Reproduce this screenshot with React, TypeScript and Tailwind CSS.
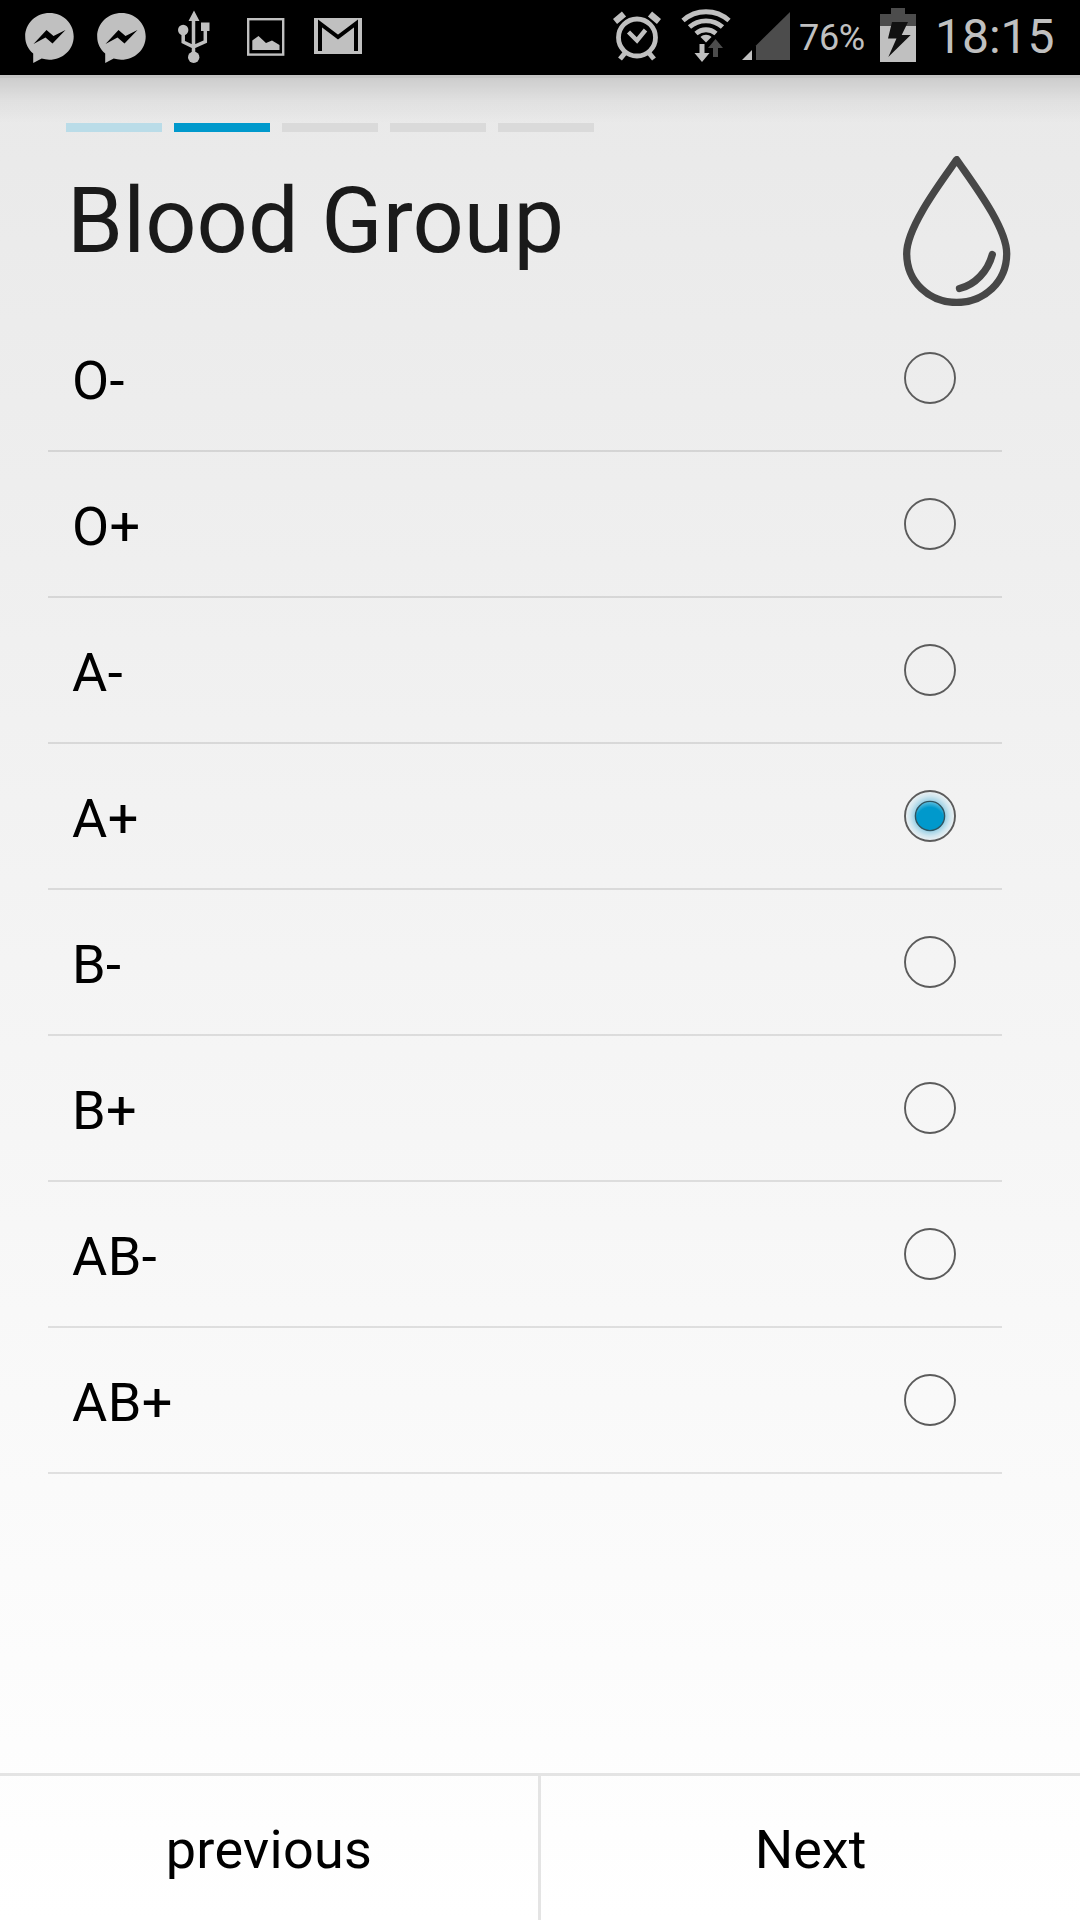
import { useState } from "react";

const groups = ["O-", "O+", "A-", "A+", "B-", "B+", "AB-", "AB+"];

const steps = ["bg-[#badce8]", "bg-[#0099cc]", "bg-[#dadada]", "bg-[#dadada]", "bg-[#dadada]"];

function MessengerIcon() {
  return (
    <svg width="50" height="52" viewBox="0 0 50 52" className="shrink-0">
      <path
        fill="#c0c0c0"
        d="M25.500 1C12 1 1.200 11.200 1.200 24.500c0 7.200 3.200 13 8 17V51l8.500-4.400c2.300.7 4.900 1.100 7.500 1.100 13.500 0 24.500-10.200 24.500-23.300S39 1 25.500 1Z"
      />
      <path fill="#000" d="M9.500 32 22.500 18l7 6 12-6L28.500 31.500 21.500 25.500Z" />
    </svg>
  );
}

function UsbIcon() {
  return (
    <svg width="34" height="54" viewBox="0 0 34 54" className="shrink-0">
      <path fill="#c0c0c0" d="M17 .5 22.500 11h-11ZM24 12.500h8.500V21H24Z" />
      <path fill="none" stroke="#c0c0c0" strokeWidth="3.500" d="M16.500 9v36M6.200 21v11L16.500 36.800M28.300 20v11.500L16.500 36.800" />
      <circle cx="6.200" cy="20" r="5.200" fill="#c0c0c0" />
      <circle cx="16.700" cy="47.300" r="5.700" fill="#c0c0c0" />
    </svg>
  );
}

function PictureIcon() {
  return (
    <svg width="38" height="38" viewBox="0 0 38 38" className="shrink-0">
      <rect x="1.200" y="1.200" width="35" height="35.400" fill="none" stroke="#c0c0c0" strokeWidth="2.400" />
      <path fill="#c0c0c0" d="M5.300 32V22.500l6.200-4.500 7.500 7 6-2.500 7.500 4.500v5Z" />
    </svg>
  );
}

function GmailIcon() {
  return (
    <svg width="48" height="36" viewBox="0 0 48 36" className="shrink-0">
      <path fill="#c0c0c0" d="M0 0h48v36H0Z" />
      <path fill="none" stroke="#000" strokeWidth="4" d="M6 33V5.500L24 19 42 5.500V33" />
    </svg>
  );
}

function AlarmIcon() {
  return (
    <svg width="48" height="50" viewBox="0 0 48 50" className="shrink-0">
      <circle cx="24" cy="26.500" r="18.500" fill="none" stroke="#c0c0c0" strokeWidth="4.800" />
      <path fill="none" stroke="#c0c0c0" strokeWidth="6.500" d="M2 10.500 11 3M46 10.500 37 3" />
      <path fill="none" stroke="#c0c0c0" strokeWidth="5" d="m12 42-5 6M36 42l5 6" />
      <path fill="none" stroke="#c0c0c0" strokeWidth="4.400" d="m15.500 21 8.500 8.500L32.500 19" />
    </svg>
  );
}

function WifiIcon() {
  return (
    <svg width="50" height="54" viewBox="0 0 50 54" className="shrink-0">
      <g fill="none" stroke="#c0c0c0" strokeWidth="4.800">
        <path d="M2 12.500C15 .800 35 .800 48 12.500" />
        <path d="M8.500 19c9-8.300 24-8.300 33 0" />
        <path d="M15 25.500c6-5 14-5 20 0" />
      </g>
      <path fill="#c0c0c0" d="M25 34.500 19.500 29c3-3 8-3 11 0Z" />
      <path fill="#4c4c4c" d="M34.500 31 42 40h-5v9h-5v-9h-5Z" />
      <path fill="#c0c0c0" d="M18.500 36h5v9h5L21 54l-7.500-9h5Z" />
    </svg>
  );
}

function SignalIcon() {
  return (
    <svg width="48" height="48" viewBox="0 0 48 48" className="shrink-0">
      <path fill="#4c4c4c" d="M48 0v48H14V33.500Z" />
      <path fill="#c0c0c0" d="M10 38v10H0Z" />
    </svg>
  );
}

function BatteryIcon() {
  return (
    <svg width="36" height="54" viewBox="0 0 36 54" className="shrink-0">
      <path fill="#4c4c4c" d="M11 0h14v6h11v12H0V6h11Z" />
      <path fill="#c0c0c0" d="M0 18h36v36H0Z" />
      <path fill="#111" d="M12 14h16l-6.300 13h9L8.300 49l8.200-18.500H8Z" />
    </svg>
  );
}

function DropIcon() {
  return (
    <svg width="108" height="150" viewBox="0 0 108 150" className="shrink-0">
      <g fill="none" stroke="#474747" strokeWidth="7.300" strokeLinecap="round" strokeLinejoin="round">
        <path d="M53.700 3.700C38 26 3.700 71 3.700 97.500c0 28.500 22.500 49 50 49s50-20.500 50-49C103.700 71 69 26 53.700 3.700Z" />
        <path d="M89.300 98.500C85 115 72 129 56.500 132.500" />
      </g>
    </svg>
  );
}

function Radio({ checked }: { checked: boolean }) {
  return (
    <svg width="52" height="52" viewBox="0 0 52 52" className="shrink-0">
      <defs>
        <radialGradient id="glow">
          <stop offset="0.550" stopColor="#8fcbe2" />
          <stop offset="0.800" stopColor="#cfe6ef" />
          <stop offset="1" stopColor="#f0f2f3" />
        </radialGradient>
        <radialGradient id="dot" cx="0.500" cy="0.680" r="0.680">
          <stop offset="0.700" stopColor="#0099cc" />
          <stop offset="1" stopColor="#63bfdf" />
        </radialGradient>
      </defs>
      <circle cx="26" cy="26" r="25" fill={checked ? "url(#glow)" : "none"} stroke="#5b5b5b" strokeWidth="1.900" />
      {checked && <circle cx="26" cy="26" r="14.600" fill="url(#dot)" stroke="#2f5460" strokeWidth="1.400" />}
    </svg>
  );
}

function StatusBar() {
  return (
    <div className="flex h-[75px] shrink-0 bg-black text-[#c0c0c0]">
      <div className="flex items-start">
        <div className="pt-3 pl-6">
          <MessengerIcon />
        </div>
        <div className="pt-3 pl-[22px]">
          <MessengerIcon />
        </div>
        <div className="pt-2.5 pl-[31px]">
          <UsbIcon />
        </div>
        <div className="pt-[18px] pl-[36px]">
          <PictureIcon />
        </div>
        <div className="pt-[18px] pl-[29px]">
          <GmailIcon />
        </div>
      </div>
      <div className="ml-auto flex items-start">
        <div className="pt-[11px]">
          <AlarmIcon />
        </div>
        <div className="pt-2 pl-5">
          <WifiIcon />
        </div>
        <div className="pt-3 pl-[11px]">
          <SignalIcon />
        </div>
        <span className="w-[90px] pt-[17px] pl-[9px] text-[36px] leading-[42px] tracking-[-0.3px] whitespace-nowrap">
          76%
        </span>
        <div className="pt-2">
          <BatteryIcon />
        </div>
        <span className="w-[164px] pt-2 pl-[19px] text-[48px] leading-[58px] whitespace-nowrap">18:15</span>
      </div>
    </div>
  );
}

export default function App() {
  const [selected, setSelected] = useState("A+");

  return (
    <div className="flex h-[1920px] w-[1080px] flex-col overflow-hidden bg-linear-to-b from-[#e8e8e8] via-[#f4f4f4] to-white font-[Roboto,sans-serif]">
      <StatusBar />

      <div className="h-[3px] shrink-0 bg-[#c4c4c4]" />
      <div className="h-[45px] shrink-0 bg-linear-to-b from-black/12 via-black/4 to-transparent" />

      <header className="flex h-[183px] shrink-0 justify-between pr-[69px] pl-[66px]">
        <div>
          <div className="flex gap-3">
            {steps.map((color, i) => (
              <div key={i} className={`h-[9px] w-24 ${color}`} />
            ))}
          </div>
          <h1 className="mt-[37px] pl-px text-[90px] leading-[105px] tracking-[0.1px] text-[#1a1a1a]">
            Blood Group
          </h1>
        </div>
        <div className="pt-[33px]">
          <DropIcon />
        </div>
      </header>

      <ul className="mr-[78px] ml-12">
        {groups.map((group) => (
          <li
            key={group}
            onClick={() => setSelected(group)}
            className="flex h-[146px] items-center justify-between border-b-2 border-black/10 pr-[46px] pl-6"
          >
            <span className="pt-1.5 text-[54px] leading-[64px] tracking-[0.4px] text-black">{group}</span>
            <Radio checked={group === selected} />
          </li>
        ))}
      </ul>

      <footer className="mt-auto flex h-[147px] border-t-3 border-[#e4e4e4] text-[54px] text-black">
        <button type="button" className="w-[541px] border-r-3 border-[#e4e4e4] pt-0.5 tracking-[0.3px]">
          previous
        </button>
        <button type="button" className="flex-1 pt-0.5">
          Next
        </button>
      </footer>
    </div>
  );
}
